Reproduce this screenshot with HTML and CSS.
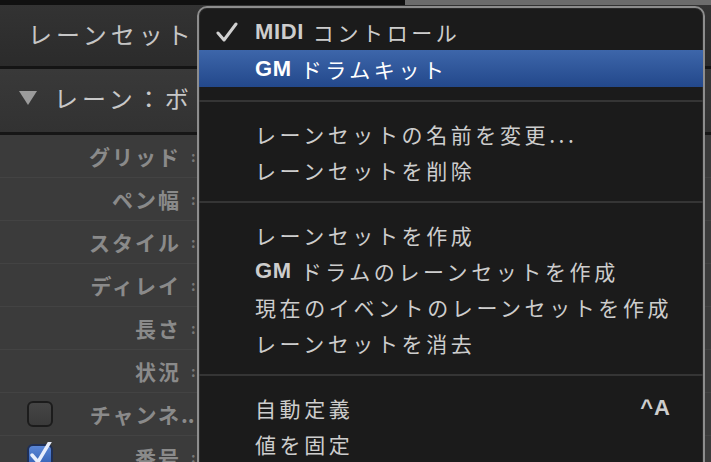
FILE: index.html
```html
<!DOCTYPE html>
<html lang="ja">
<head>
    <meta charset="UTF-8">
    <meta name="viewport" content="width=device-width, initial-scale=1.0">
    <title>レーンセット</title>
    <link rel="stylesheet" href="styles.css">
</head>
<body>
    <div class="topbar">
        <div class="topbar-dark"></div>
        <div class="topbar-light"></div>
    </div>

    <div class="inspector">
        <div class="set-header">レーンセット</div>

        <div class="lane-header">
            <svg class="disclosure" width="18" height="14" viewBox="0 0 18 14">
                <polygon points="0,0 18,0 9,14" fill="#9b9b9b"/>
            </svg>
            <span>レーン：ボリューム</span>
        </div>

        <div class="params">
            <div class="param"><span class="slot"></span><span class="param-label">グリッド</span><span class="param-colon">:</span></div>
            <div class="param"><span class="slot"></span><span class="param-label">ペン幅</span><span class="param-colon">:</span></div>
            <div class="param"><span class="slot"></span><span class="param-label">スタイル</span><span class="param-colon">:</span></div>
            <div class="param"><span class="slot"></span><span class="param-label">ディレイ</span><span class="param-colon">:</span></div>
            <div class="param"><span class="slot"></span><span class="param-label">長さ</span><span class="param-colon">:</span></div>
            <div class="param"><span class="slot"></span><span class="param-label">状況</span><span class="param-colon">:</span></div>
            <div class="param">
                <span class="slot"><span class="checkbox"></span></span>
                <span class="param-label">チャンネ</span><span class="param-colon dots">..</span>
            </div>
            <div class="param">
                <span class="slot">
                    <span class="checkbox checked">
                        <svg class="tick" width="26" height="26" viewBox="0 0 26 26">
                            <polyline points="5,13 11,20 24,-2" fill="none" stroke="#e8eefc" stroke-width="3.5" stroke-linecap="round" stroke-linejoin="round"/>
                        </svg>
                    </span>
                </span>
                <span class="param-label">番号</span><span class="param-colon">:</span>
            </div>
        </div>
    </div>

    <!-- ポップアップメニュー -->
    <div class="menu">
        <div class="menu-item">
            <svg class="menu-check" width="22" height="20" viewBox="0 0 22 20">
                <polyline points="2,11 8,18 20,2" fill="none" stroke="#d0d0d0" stroke-width="3" stroke-linecap="round" stroke-linejoin="round"/>
            </svg>
            <span class="latin">MIDI</span><span class="after-latin">コントロール</span>
        </div>
        <div class="menu-item selected"><span class="latin">GM</span><span class="after-latin">ドラムキット</span></div>

        <div class="menu-sep"></div>

        <div class="menu-item"><span>レーンセットの名前を変更...</span></div>
        <div class="menu-item"><span>レーンセットを削除</span></div>

        <div class="menu-sep"></div>

        <div class="menu-item"><span>レーンセットを作成</span></div>
        <div class="menu-item"><span class="latin">GM</span><span class="after-latin">ドラムのレーンセットを作成</span></div>
        <div class="menu-item"><span>現在のイベントのレーンセットを作成</span></div>
        <div class="menu-item"><span>レーンセットを消去</span></div>

        <div class="menu-sep"></div>

        <div class="menu-item"><span>自動定義</span><span class="shortcut">^A</span></div>
        <div class="menu-item"><span>値を固定</span></div>
    </div>
</body>
</html>
```

FILE: styles.css
```css
body {
    margin: 0;
    width: 711px;
    height: 462px;
    overflow: hidden;
    position: relative;
    background-color: #3b3b3b;
    font-family: 'Liberation Sans', 'Noto Sans CJK JP', sans-serif;
}

.topbar {
    display: flex;
    height: 5px;
}

.topbar-dark {
    width: 405px;
    background-color: #101010;
}

.topbar-light {
    flex: 1;
    background-color: #6c6c6c;
}

.set-header {
    height: 64px;
    box-sizing: border-box;
    padding: 0 0 5px 28px;
    display: flex;
    align-items: center;
    background: linear-gradient(#333333, #2b2b2b);
    border-bottom: 3px solid #141414;
    color: #c6c6c6;
    font-size: 24px;
    letter-spacing: 4px;
    font-family: 'Noto Sans CJK JP', sans-serif;
}

.lane-header {
    height: 66px;
    box-sizing: border-box;
    padding: 0 0 6px 19px;
    display: flex;
    align-items: center;
    gap: 17px;
    background: linear-gradient(#393939, #323232);
    border-bottom: 3px solid #161616;
    color: #c8c8c8;
    font-size: 24px;
    letter-spacing: 4px;
    font-family: 'Noto Sans CJK JP', sans-serif;
    white-space: nowrap;
}

.params {
    display: flex;
    flex-direction: column;
}

.param {
    height: 43px;
    box-sizing: border-box;
    display: grid;
    grid-template-columns: 60px 121px 18px;
    align-items: center;
    border-bottom: 1px solid #434343;
    background-color: #3b3b3b;
    color: #8a8a8a;
    font-family: 'Noto Sans CJK JP', sans-serif;
    font-weight: bold;
    font-size: 21px;
}

.param-label {
    text-align: right;
    letter-spacing: 2px;
    white-space: nowrap;
}

.param-colon {
    padding-left: 10px;
    font-size: 14px;
    color: #777777;
}

.param-colon.dots {
    padding-left: 0;
    font-size: 21px;
    color: #8a8a8a;
}

.slot {
    display: flex;
    padding-left: 27px;
}

.checkbox {
    width: 26px;
    height: 26px;
    box-sizing: border-box;
    border: 2px solid #1c1c1c;
    border-radius: 6px;
    background: linear-gradient(#454545, #3a3a3a);
    position: relative;
}

.checkbox.checked {
    border-color: #1f2f55;
    background: linear-gradient(#5a86d6, #2f5cb0);
}

.tick {
    position: absolute;
    left: -2px;
    top: -4px;
}

.menu {
    position: absolute;
    left: 197px;
    top: 6px;
    width: 508px;
    height: 470px;
    box-sizing: border-box;
    padding-top: 6px;
    border: 2px solid #8d8d8d;
    border-radius: 10px;
    background-color: #1b1b1b;
    box-shadow: inset 0 0 0 1px #2a2a2a;
    color: #cdcdcd;
    font-family: 'Noto Sans CJK JP', sans-serif;
    font-size: 21px;
    letter-spacing: 3.6px;
}

.menu-item {
    position: relative;
    height: 36px;
    display: flex;
    align-items: center;
    padding: 0 32px 0 56px;
    white-space: nowrap;
}

.menu-item.selected {
    height: 37px;
    background: linear-gradient(#3d66aa, #23488b);
    color: #ffffff;
}

.menu-check {
    position: absolute;
    left: 17px;
    top: 8px;
}

.latin {
    font-family: 'Liberation Sans', sans-serif;
    font-weight: bold;
    font-size: 22px;
    letter-spacing: 0.6px;
}

.after-latin {
    margin-left: 9px;
}

.shortcut {
    margin-left: auto;
    font-family: 'Liberation Sans', sans-serif;
    font-weight: bold;
    font-size: 22px;
    letter-spacing: 1px;
}

.menu-sep {
    height: 2px;
    margin: 13px 0 14px;
    background-color: #353535;
}
```
